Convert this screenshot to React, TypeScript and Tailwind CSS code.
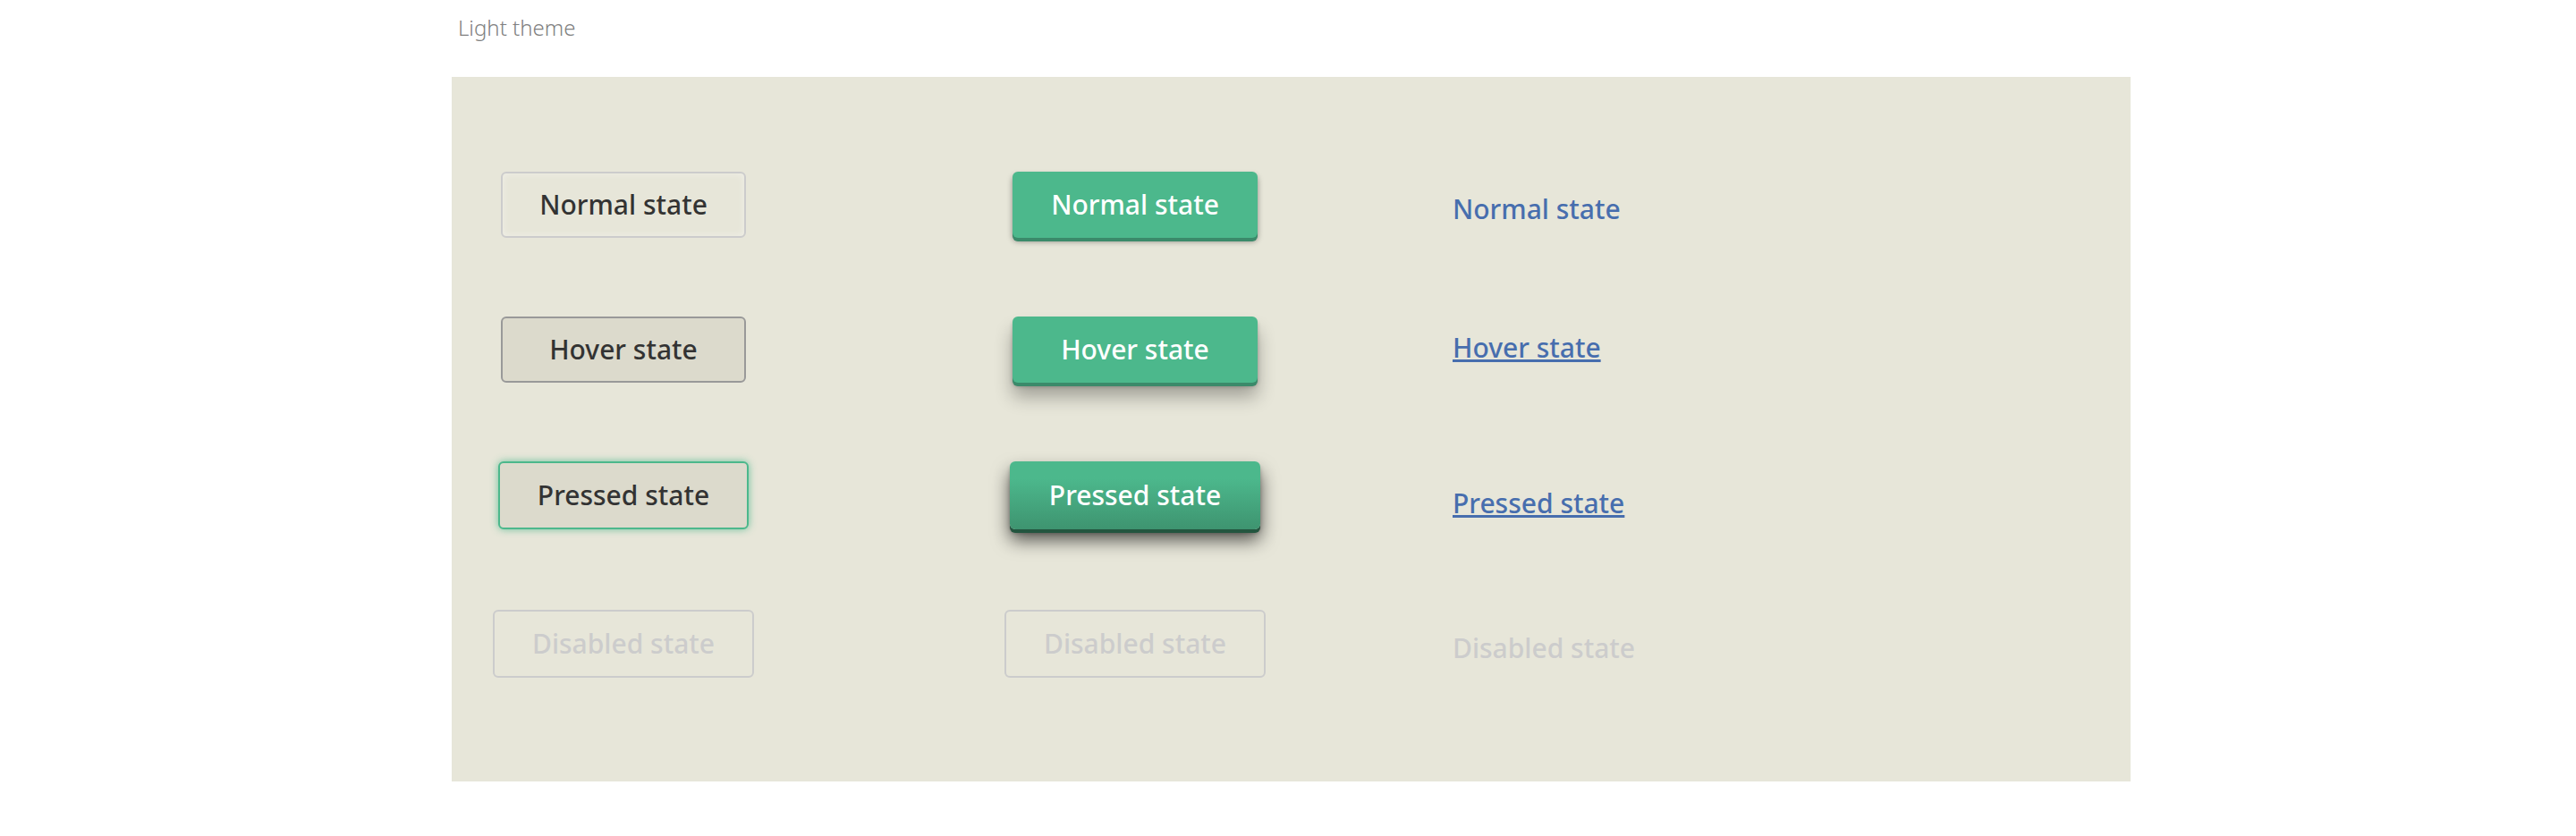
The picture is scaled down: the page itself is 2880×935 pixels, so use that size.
const base = "rounded-md text-3xl leading-9 font-medium whitespace-nowrap";
const regular = "h-[74px] w-[274px]";
const pressed = "h-[76px] w-[280px]";
const disabled =
  "h-[76px] w-[292px] border-2 border-[#cccccc] text-[#cccccc]";
const stack = "grid grid-rows-[162px_162px_166px_76px] items-start justify-items-center";

export default function App() {
  return (
    <main className="bg-white pr-[498px] pb-[61px] pl-[505px] font-['Noto_Sans',sans-serif]">
      <h1 className="flex h-[86px] items-start pt-[15px] pl-[7px] text-2xl leading-8 font-light text-[#808080]">
        Light theme
      </h1>
      <section
        aria-label="Light theme buttons"
        className="flex items-start bg-[#e7e6d9] pt-[106px] pb-[116px] pl-[46px]"
      >
        <div className={`${stack} mr-[280px]`}>
          <button
            type="button"
            className={`${base} ${regular} border-2 border-[#cccccc] text-[#333333] shadow-[inset_0_0_8px_rgba(255,255,255,0.4)]`}
          >
            Normal state
          </button>
          <button
            type="button"
            className={`${base} ${regular} border-2 border-[#999999] bg-[#dcdacc] text-[#333333]`}
          >
            Hover state
          </button>
          <button
            type="button"
            className={`${base} ${pressed} border-2 border-[#4cb88c] bg-[#dcdacc] text-[#333333] shadow-[0_0_8px_rgba(76,184,140,0.8)]`}
          >
            Pressed state
          </button>
          <button type="button" disabled className={`${base} ${disabled}`}>
            Disabled state
          </button>
        </div>

        <div className={`${stack} mr-[209px]`}>
          <button
            type="button"
            className={`${base} ${regular} bg-[#4cb88c] text-white shadow-[0_4px_0_#3b8a6a,0_4px_6px_rgba(0,0,0,0.4)]`}
          >
            Normal state
          </button>
          <button
            type="button"
            className={`${base} ${regular} bg-[#4cb88c] text-white shadow-[0_4px_0_#3b8a6a,0_4px_4px_rgba(0,0,0,0.25),0_16px_20px_rgba(0,0,0,0.3)]`}
          >
            Hover state
          </button>
          <button
            type="button"
            className={`${base} ${pressed} bg-linear-to-b from-[#4cb88c] from-25% to-[#3e9470] text-white shadow-[0_4px_0_#23553f,0_4px_4px_rgba(0,0,0,0.25),0_12px_20px_rgba(0,0,0,0.65)]`}
          >
            Pressed state
          </button>
          <button type="button" disabled className={`${base} ${disabled}`}>
            Disabled state
          </button>
        </div>

        <nav
          aria-label="Link states"
          className="grid grid-rows-[155px_174px_162px_auto] items-start justify-items-start pt-6 text-3xl leading-9 font-medium whitespace-nowrap text-[#476eae]"
        >
          <a href="#normal">Normal state</a>
          <a
            href="#hover"
            className="underline decoration-[3px] underline-offset-[2px] [text-decoration-skip-ink:none]"
          >
            Hover state
          </a>
          <a
            href="#pressed"
            className="underline decoration-[3px] underline-offset-[2px] [text-decoration-skip-ink:none]"
          >
            Pressed state
          </a>
          <a aria-disabled="true" href="#disabled" className="text-[#cccccc]">
            Disabled state
          </a>
        </nav>
      </section>
    </main>
  );
}
